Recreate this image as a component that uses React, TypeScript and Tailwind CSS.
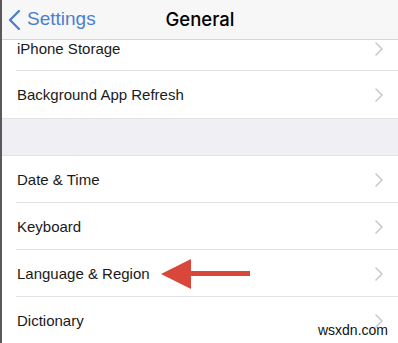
import React from "react";

const font = { fontFamily: '"Liberation Sans", Arial, sans-serif' };

const Chevron = () => (
  <svg width="8" height="14" viewBox="0 0 8 14" className="shrink-0">
    <path d="M1 1l6 6-6 6" fill="none" stroke="#c7c7cc" strokeWidth="1.5" strokeLinecap="round" strokeLinejoin="round" />
  </svg>
);

const Row = ({
  label,
  last = false,
  className = "h-[47px]",
  children,
}: {
  label: string;
  last?: boolean;
  className?: string;
  children?: React.ReactNode;
}) => (
  <div className={`relative flex items-center bg-white pl-[15px] pr-[15px] ${className}`}>
    <span className="text-[15px] leading-[18px] text-[#1a1a1a]">{label}</span>
    <div className="flex flex-1 items-center">{children}</div>
    <Chevron />
    {!last && <div className="absolute bottom-0 left-[14px] right-0 h-px bg-[#e2e2e4]" />}
  </div>
);

const Arrow = () => (
  <svg width="92" height="32" viewBox="0 0 92 32" className="ml-[10px]">
    <path d="M1 16L31 1v12h59v5H31v13z" fill="#d8473a" />
  </svg>
);

export default function App() {
  return (
    <div className="relative h-[343px] w-[398px] overflow-hidden border-l-2 border-[#5a5a5a] bg-white" style={font}>
      {/* nav bar */}
      <div className="grid h-[40px] grid-cols-[1fr_auto_1fr] items-center border-b border-[#d6d6d8] bg-[#f7f7f7]">
        <div className="flex items-center gap-[6px] pl-[6px] text-[#4a7fcf]">
          <svg width="13" height="22" viewBox="0 0 13 22">
            <path d="M11 2L2 11l9 9" fill="none" stroke="#4a7fcf" strokeWidth="2.3" strokeLinecap="round" strokeLinejoin="round" />
          </svg>
          <span className="text-[19px]">Settings</span>
        </div>
        <span className="text-[18.5px] font-medium text-black" style={{ fontFamily: "Inter, sans-serif" }}>
          General
        </span>
        <div />
      </div>

      {/* first group, scrolled partly under the bar */}
      <Row label="iPhone Storage" className="h-[31px] pb-[14px]" />
      <Row label="Background App Refresh" last />

      <div className="h-[38px] border-y border-[#e4e4e8] bg-[#efeff4]" />

      <Row label="Date & Time" />
      <Row label="Keyboard" />
      <Row label="Language & Region">
        <Arrow />
      </Row>
      <Row label="Dictionary" last />

      <span className="absolute bottom-[2px] right-[10px] text-[14px] text-[#111]">wsxdn.com</span>
    </div>
  );
}
